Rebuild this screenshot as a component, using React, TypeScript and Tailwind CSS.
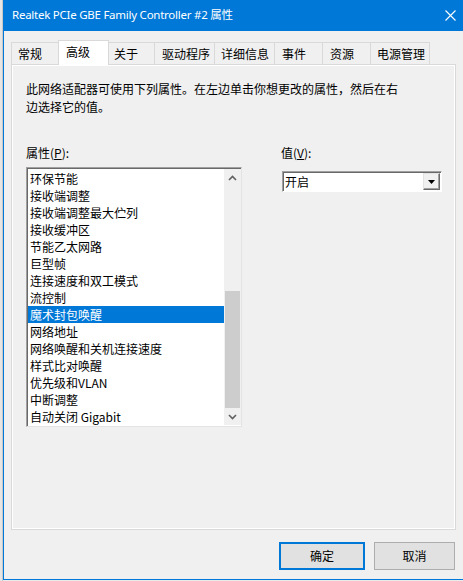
import React from "react";

const tabs = [
  { label: "常规", w: "w-[47px]", pl: "pl-[6px]", first: true },
  { label: "高级", w: "w-[51px]", pl: "pl-[7px]", active: true },
  { label: "关于", w: "w-[46px]", pl: "pl-[5px]" },
  { label: "驱动程序", w: "w-[60px]", pl: "pl-[7px]" },
  { label: "详细信息", w: "w-[60px]", pl: "pl-[6px]" },
  { label: "事件", w: "w-[48px]", pl: "pl-[7px]" },
  { label: "资源", w: "w-[48px]", pl: "pl-[7px]" },
  { label: "电源管理", w: "w-[59px]", pl: "pl-[6px]" },
];

const props = [
  "环保节能",
  "接收端调整",
  "接收端调整最大伫列",
  "接收缓冲区",
  "节能乙太网路",
  "巨型帧",
  "连接速度和双工模式",
  "流控制",
  "魔术封包唤醒",
  "网络地址",
  "网络唤醒和关机连接速度",
  "样式比对唤醒",
  "优先级和VLAN",
  "中断调整",
  "自动关闭 Gigabit",
];

const selected = 8;

function Chevron({ up }: { up?: boolean }) {
  return (
    <svg width="9" height="6" viewBox="0 0 9 6">
      <polyline
        points={up ? "1,5 4.5,1.5 8,5" : "1,1 4.5,4.5 8,1"}
        fill="none"
        stroke="#606060"
        strokeWidth="1.6"
      />
    </svg>
  );
}

export default function App() {
  return (
    <div
      className="flex w-[463px] h-[581px] bg-[#ebebeb] overflow-hidden text-black"
      style={{ fontFamily: '"Noto Sans CJK SC", "Noto Sans", sans-serif' }}
    >
      <div className="w-[3px] shrink-0 bg-[#e6e6e6] border-r border-[#c8c8c8]" />
      <div className="flex flex-col flex-1 h-[580px] bg-[#f0f0f0] border-l border-b border-[#0078d7]">
        {/* title bar */}
        <div className="flex items-center justify-between h-[31px] bg-[#0078d7] pl-[8px] pr-[7px] text-white">
          <span
            className="text-[11.5px] tracking-[-0.25px] leading-none -mt-px"
            style={{ fontFamily: '"Noto Sans", "Noto Sans CJK SC", sans-serif' }}
          >
            Realtek PCIe GBE Family Controller #2 属性
          </span>
          <svg width="11" height="11" viewBox="0 0 11 11">
            <path d="M0.5 0.5 L10.5 10.5 M10.5 0.5 L0.5 10.5" stroke="#fff" strokeWidth="1.1" />
          </svg>
        </div>

        {/* tabs */}
        <div className="flex items-end h-[24px] mt-[9px] ml-[7px] relative z-10">
          {tabs.map(t =>
            t.active ? (
              <div
                key={t.label}
                className={`${t.w} ${t.pl} h-[25px] -mb-px flex items-center pb-[3px] bg-white border border-b-0 border-[#d9d9d9] text-[12px]`}
              >
                {t.label}
              </div>
            ) : (
              <div
                key={t.label}
                className={`${t.w} ${t.pl} h-[22px] flex items-center bg-[#f0f0f0] border-t border-[#d9d9d9] text-[12px] ${
                  t.first ? "border-l" : "border-r"
                }`}
              >
                {t.label}
              </div>
            )
          )}
        </div>

        {/* panel */}
        <div className="ml-[7px] w-[445px] h-[466px] border border-[#d9d9d9] shadow-[inset_0_0_0_1px_#ffffff] bg-[#f0f0f0] pl-[14px] pt-[15px]">
          <p className="text-[12px] leading-[18px]">
            此网络适配器可使用下列属性。在左边单击你想更改的属性，然后在右
            <br />
            边选择它的值。
          </p>

          <div className="flex mt-[28px]">
            <div className="w-[216px]">
              <div className="text-[12px] leading-[18px]">
                属性(<span className="underline">P</span>):
              </div>
              <div className="mt-[5px] h-[260px] flex border-t border-l border-[#a0a0a0] border-b border-r border-b-[#e3e3e3] border-r-[#e3e3e3] shadow-[inset_1px_1px_0_#696969] bg-white pl-px pt-px overflow-hidden">
                <div className="flex-1 pt-[1px]">
                  {props.map((p, i) => (
                    <div
                      key={p}
                      className={`h-[17px] leading-[17px] text-[12px] pl-[2px] whitespace-nowrap ${
                        i === selected ? "bg-[#0078d7] text-white" : ""
                      }`}
                    >
                      {p}
                    </div>
                  ))}
                </div>
                <div className="w-[17px] shrink-0 flex flex-col bg-[#f0f0f0] h-[256px]">
                  <div className="h-[17px] flex items-center justify-center">
                    <Chevron up />
                  </div>
                  <div className="flex-1 flex flex-col justify-end">
                    <div className="h-[117px] mx-px bg-[#cdcdcd]" />
                  </div>
                  <div className="h-[17px] flex items-center justify-center">
                    <Chevron />
                  </div>
                </div>
              </div>
            </div>

            <div className="ml-[39px] w-[162px]">
              <div className="text-[12px] leading-[18px]">
                值(<span className="underline">V</span>):
              </div>
              <div className="mt-[9px] ml-px w-[160px] h-[21px] flex items-center border-t border-l border-[#a0a0a0] border-b border-r border-b-[#ffffff] border-r-[#ffffff] shadow-[inset_1px_1px_0_#696969] bg-white pl-[2px] pr-px">
                <span className="flex-1 text-[12px] leading-none">开启</span>
                <div className="w-[17px] h-[17px] flex items-center justify-center bg-[#f0f0f0] border-t border-l border-[#e3e3e3] border-b border-r border-b-[#696969] border-r-[#696969] shadow-[inset_-1px_-1px_0_#a0a0a0]">
                  <svg width="7" height="4" viewBox="0 0 7 4">
                    <polygon points="0,0 7,0 3.5,4" fill="#000" />
                  </svg>
                </div>
              </div>
            </div>
          </div>
        </div>

        {/* buttons */}
        <div className="flex justify-end gap-[9px] mt-[12px] pr-[8px]">
          <button className="w-[86px] h-[28px] bg-[#e1e1e1] border-2 border-[#0078d7] text-[12px]">
            确定
          </button>
          <button className="w-[81px] h-[28px] bg-[#e1e1e1] border border-[#adadad] text-[12px]">
            取消
          </button>
        </div>
      </div>
    </div>
  );
}
